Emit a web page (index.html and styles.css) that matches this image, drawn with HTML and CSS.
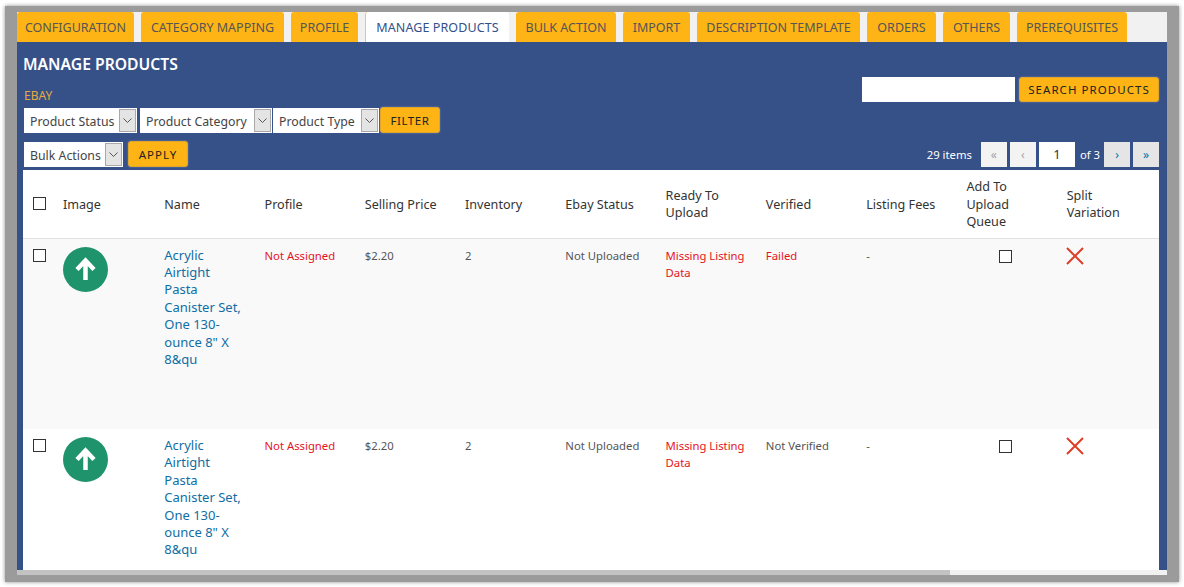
FILE: index.html
```html
<!DOCTYPE html>
<html lang="en">
<head>
  <meta charset="UTF-8" />
  <title>Manage Products</title>
  <link rel="stylesheet" href="styles.css">
</head>
<body>
  <div class="frame">
    <div class="tabs">
      <a class="tab w-config">CONFIGURATION</a>
      <a class="tab w-category">CATEGORY MAPPING</a>
      <a class="tab w-profile">PROFILE</a>
      <a class="tab active w-manage">MANAGE PRODUCTS</a>
      <a class="tab w-bulk">BULK ACTION</a>
      <a class="tab w-import">IMPORT</a>
      <a class="tab w-desc">DESCRIPTION TEMPLATE</a>
      <a class="tab w-orders">ORDERS</a>
      <a class="tab w-others">OTHERS</a>
      <a class="tab w-prereq">PREREQUISITES</a>
    </div>

    <div class="panel">
      <div class="top-row">
        <div>
          <h2>MANAGE PRODUCTS</h2>
          <div class="market">EBAY</div>
          <div class="filters">
            <div class="select w-status"><select><option>Product Status</option></select><span class="arrow"><svg width="9" height="5" viewBox="0 0 9 5"><path d="M0.5 0.5 4.5 4.5 8.5 0.5" fill="none" stroke="#555"/></svg></span></div>
            <div class="select w-cat"><select><option>Product Category</option></select><span class="arrow"><svg width="9" height="5" viewBox="0 0 9 5"><path d="M0.5 0.5 4.5 4.5 8.5 0.5" fill="none" stroke="#555"/></svg></span></div>
            <div class="select w-type"><select><option>Product Type</option></select><span class="arrow"><svg width="9" height="5" viewBox="0 0 9 5"><path d="M0.5 0.5 4.5 4.5 8.5 0.5" fill="none" stroke="#555"/></svg></span></div>
            <button class="btn w-filter">FILTER</button>
          </div>
        </div>
        <div class="search">
          <input type="text" class="search-input" />
          <button class="btn w-search">SEARCH PRODUCTS</button>
        </div>
      </div>

      <div class="actions-row">
        <div class="bulk">
          <div class="select w-actions"><select><option>Bulk Actions</option></select><span class="arrow"><svg width="9" height="5" viewBox="0 0 9 5"><path d="M0.5 0.5 4.5 4.5 8.5 0.5" fill="none" stroke="#555"/></svg></span></div>
          <button class="btn w-apply">APPLY</button>
        </div>
        <div class="pager">
          <span class="count">29 items</span>
          <span class="page off">«</span>
          <span class="page off">‹</span>
          <input type="text" class="page-input" value="1" />
          <span class="of">of 3</span>
          <a class="page">›</a>
          <a class="page">»</a>
        </div>
      </div>

      <table>
        <thead>
          <tr>
            <th class="col-check"><input type="checkbox" /></th>
            <th class="col-image">Image</th>
            <th>Name</th>
            <th>Profile</th>
            <th>Selling Price</th>
            <th>Inventory</th>
            <th>Ebay Status</th>
            <th>Ready To Upload</th>
            <th>Verified</th>
            <th>Listing Fees</th>
            <th>Add To Upload Queue</th>
            <th>Split Variation</th>
          </tr>
        </thead>
        <tbody>
          <tr class="odd">
            <td class="col-check"><input type="checkbox" /></td>
            <td class="col-image"><svg class="up-icon" width="45" height="45" viewBox="0 0 45 45"><circle cx="22.5" cy="22.5" r="22.5" fill="#1f936b"/><path d="M22.5 33V14M14 22.5 22.5 13.5 31 22.5" fill="none" stroke="#fff" stroke-width="4.5"/></svg></td>
            <td><a class="link">Acrylic Airtight Pasta Canister Set, One 130-ounce 8" X 8&amp;qu</a></td>
            <td class="red">Not Assigned</td>
            <td>$2.20</td>
            <td>2</td>
            <td>Not Uploaded</td>
            <td class="red">Missing Listing Data</td>
            <td class="red">Failed</td>
            <td>-</td>
            <td class="col-queue"><input type="checkbox" /></td>
            <td><svg class="x-icon" width="18" height="18" viewBox="0 0 18 18"><path d="M1 1 17 17M17 1 1 17" stroke="#dd3d26" stroke-width="2" fill="none"/></svg></td>
          </tr>
          <tr>
            <td class="col-check"><input type="checkbox" /></td>
            <td class="col-image"><svg class="up-icon" width="45" height="45" viewBox="0 0 45 45"><circle cx="22.5" cy="22.5" r="22.5" fill="#1f936b"/><path d="M22.5 33V14M14 22.5 22.5 13.5 31 22.5" fill="none" stroke="#fff" stroke-width="4.5"/></svg></td>
            <td><a class="link">Acrylic Airtight Pasta Canister Set, One 130-ounce 8" X 8&amp;qu</a></td>
            <td class="red">Not Assigned</td>
            <td>$2.20</td>
            <td>2</td>
            <td>Not Uploaded</td>
            <td class="red">Missing Listing Data</td>
            <td>Not Verified</td>
            <td>-</td>
            <td class="col-queue"><input type="checkbox" /></td>
            <td><svg class="x-icon" width="18" height="18" viewBox="0 0 18 18"><path d="M1 1 17 17M17 1 1 17" stroke="#dd3d26" stroke-width="2" fill="none"/></svg></td>
          </tr>
        </tbody>
      </table>
    </div>

    <div class="scrollbar"><div class="thumb"></div></div>
  </div>
</body>
</html>
```

FILE: styles.css
```css
* { box-sizing: border-box; }
html, body { height: 587px; overflow: hidden; }
body { margin: 0; background: #fff; font-family: "Noto Sans", "Open Sans", sans-serif; font-size: 12px; color: #555; }

.frame { display: flex; flex-direction: column; width: 1174px; height: 576px; margin: 6px 0 0 5px; background: #f1f1f1; border-style: solid; border-color: #9b9b9b; border-width: 6px 12px 7px 12px; box-shadow: 0 0 4px rgba(0,0,0,0.45); }

.tabs { display: flex; gap: 7px; height: 30px; flex: none; }
.tab { display: flex; align-items: center; justify-content: center; height: 30px; background: #fdb414; border-radius: 3px 3px 0 0; font-size: 12.5px; color: #555; white-space: nowrap; }
.tab.active { background: #fff; color: #32508a; border-left: 1px solid #e8c47a; letter-spacing: 0.1px; }
.w-config { width: 117px; }
.w-category { width: 143px; }
.w-profile { width: 67px; }
.w-manage { width: 144px; }
.w-bulk { width: 100px; }
.w-import { width: 67px; }
.w-desc { width: 163px; }
.w-orders { width: 69px; }
.w-others { width: 67px; }
.w-prereq { width: 110px; }

.panel { flex: 1; min-height: 0; overflow: hidden; background: #365088; padding: 0 8px 0 6px; }
.top-row { display: flex; justify-content: space-between; align-items: flex-start; }
h2 { margin: 11px 0 0; font-size: 15.7px; line-height: 22px; font-weight: 600; color: #fff; }
.market { margin: 12px 0 0 1px; font-size: 12px; line-height: 18px; color: #e6ab3f; }

.filters { display: flex; align-items: center; margin: 2px 0 0 1px; }
.select { display: flex; height: 25px; background: #fff; border: 1px solid #fff; }
.select select { flex: 1; min-width: 0; appearance: none; border: 0; outline: 0; background: #fff; padding: 3px 0 0 5px; font: 12.3px "Noto Sans", "Open Sans", sans-serif; color: #444; }
.arrow { display: flex; align-items: center; justify-content: center; width: 17px; background: #e4e4e4; border: 1px solid #a9a9a9; }
.w-status { width: 113px; margin-right: 3px; }
.w-cat { width: 132px; margin-right: 1px; }
.w-type { width: 106px; margin-right: 1px; }
.w-actions { width: 99px; margin-right: 5px; }

.btn { height: 26px; padding: 0; background: #fdb414; border: 1px solid #e0a52b; border-radius: 3px; box-shadow: 0 0 2px rgba(255,255,255,0.35); font: 11.5px "Noto Sans", "Open Sans", sans-serif; letter-spacing: 1px; color: #222; }
.w-filter { width: 60px; letter-spacing: 0.6px; }
.w-apply { width: 60px; }
.w-search { width: 140px; height: 25px; margin-left: 4px; letter-spacing: 1.05px; }

.search { display: flex; margin-top: 35px; }
.search-input { width: 153px; height: 25px; border: 0; background: #fff; }

.actions-row { display: flex; justify-content: space-between; align-items: center; height: 26px; margin-top: 8px; padding-left: 1px; }
.bulk { display: flex; align-items: center; }
.pager { display: flex; align-items: center; color: #fff; font-size: 11.3px; }
.count { margin-right: 9px; }
.page { display: flex; align-items: center; justify-content: center; width: 26px; height: 25px; margin-right: 3px; background: #e5e5e5; color: #0073aa; font-size: 12px; }
.page:last-child { margin-right: 0; }
.page.off { background: #f3f3f3; color: #a0a5aa; }
.page-input { width: 36px; height: 25px; border: 0; background: #fff; text-align: center; font: 13px "Noto Sans", "Open Sans", sans-serif; color: #333; }
.of { margin: 0 4px 0 5px; }

table { width: 100%; margin-top: 3px; border-collapse: collapse; table-layout: fixed; background: #fff; font-size: 11.3px; line-height: 17.4px; }
th { height: 68px; padding: 1px 15px 0 8px; text-align: left; font-weight: 400; font-size: 12.6px; color: #333; border-bottom: 1px solid #e1e1e1; }
th.col-check, td.col-check { width: 33px; padding: 0 0 0 10px; }
th.col-image, td.col-image { padding-left: 7px; }
td { height: 191px; padding: 8px; vertical-align: top; }
tr.odd td { background: #f9f9f9; }
td.col-check { padding-top: 10px; }
input[type="checkbox"] { appearance: none; display: block; width: 13px; height: 13px; margin: 0; background: #fff; border: 1px solid #333; }
.link { display: block; width: 78px; color: #0f6ea4; font-size: 13px; }
.red { color: #e6131c; }
.col-queue input { margin: 3px 0 0 33px; }
.up-icon, .x-icon { display: block; }
.x-icon { margin-left: -1px; }

.scrollbar { flex: none; height: 5px; background: #f1f1f1; }
.thumb { width: 933px; height: 5px; background: #c3c3c3; }
```
